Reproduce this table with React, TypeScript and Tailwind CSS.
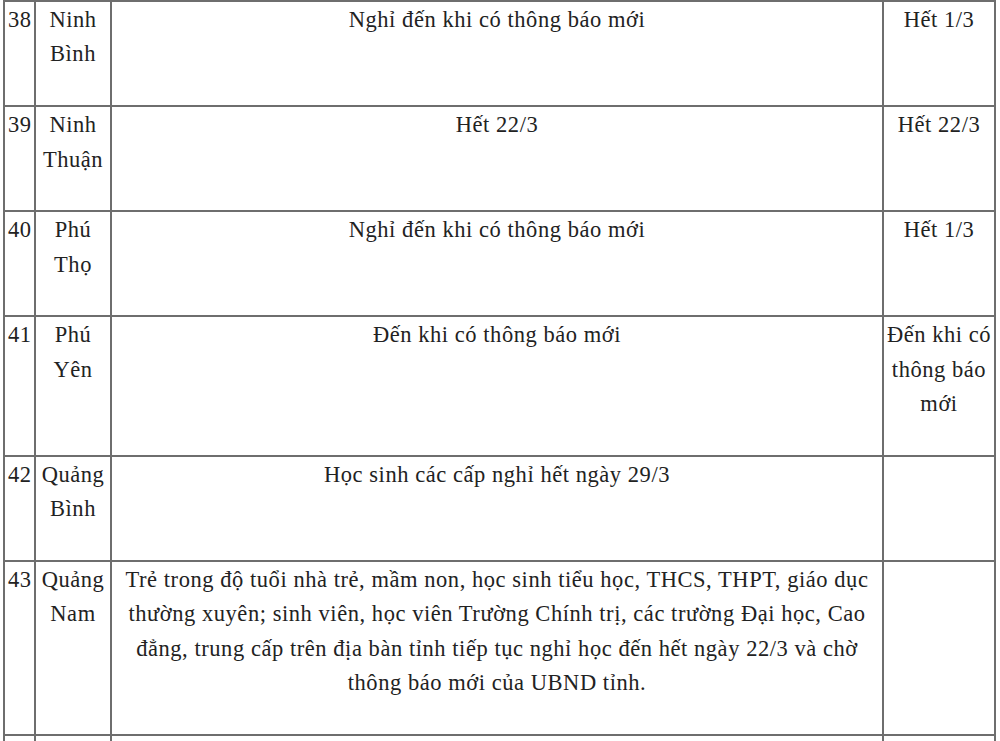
import React from "react";

type Row = { n: string; name: string[]; main: string[]; last: string[] };

const rows: Row[] = [
  { n: "38", name: ["Ninh", "Bình"], main: ["Nghỉ đến khi có thông báo mới"], last: ["Hết 1/3"] },
  { n: "39", name: ["Ninh", "Thuận"], main: ["Hết 22/3"], last: ["Hết 22/3"] },
  { n: "40", name: ["Phú", "Thọ"], main: ["Nghỉ đến khi có thông báo mới"], last: ["Hết 1/3"] },
  { n: "41", name: ["Phú", "Yên"], main: ["Đến khi có thông báo mới"], last: ["Đến khi có", "thông báo", "mới"] },
  { n: "42", name: ["Quảng", "Bình"], main: ["Học sinh các cấp nghỉ hết ngày 29/3"], last: [] },
  {
    n: "43",
    name: ["Quảng", "Nam"],
    main: [
      "Trẻ trong độ tuổi nhà trẻ, mầm non, học sinh tiểu học, THCS, THPT, giáo dục",
      "thường xuyên; sinh viên, học viên Trường Chính trị, các trường Đại học, Cao",
      "đẳng, trung cấp trên địa bàn tỉnh tiếp tục nghỉ học đến hết ngày 22/3 và chờ",
      "thông báo mới của UBND tỉnh.",
    ],
    last: [],
  },
  { n: "", name: [], main: [], last: [] },
];

const cell = "border-r-2 border-b-2 border-[#6e6e6e] pt-[1px] pb-[33.3px]";

function Lines({ items }: { items: string[] }) {
  return (
    <>
      {items.map((t, i) => (
        <div key={i} className="whitespace-nowrap">
          {t}
        </div>
      ))}
    </>
  );
}

export default function App() {
  return (
    <div className="font-['Liberation_Serif'] bg-white w-[1000px] h-[741px] overflow-hidden text-[#222222] text-[22.5px] tracking-[0.55px] leading-[34.4px]">
      <div className="ml-[3px] w-[993px] grid grid-cols-[31px_76px_772px_112px] border-l-2 border-t-2 border-[#6e6e6e]">
        {rows.map((r, idx) => (
          <React.Fragment key={idx}>
            <div className={`${cell} pl-[3px]`}>{r.n}</div>
            <div className={`${cell} text-center`}>
              <Lines items={r.name} />
            </div>
            <div className={`${cell} text-center`}>
              <Lines items={r.main} />
            </div>
            <div className={`${cell} text-center`}>
              <Lines items={r.last} />
            </div>
          </React.Fragment>
        ))}
      </div>
    </div>
  );
}
